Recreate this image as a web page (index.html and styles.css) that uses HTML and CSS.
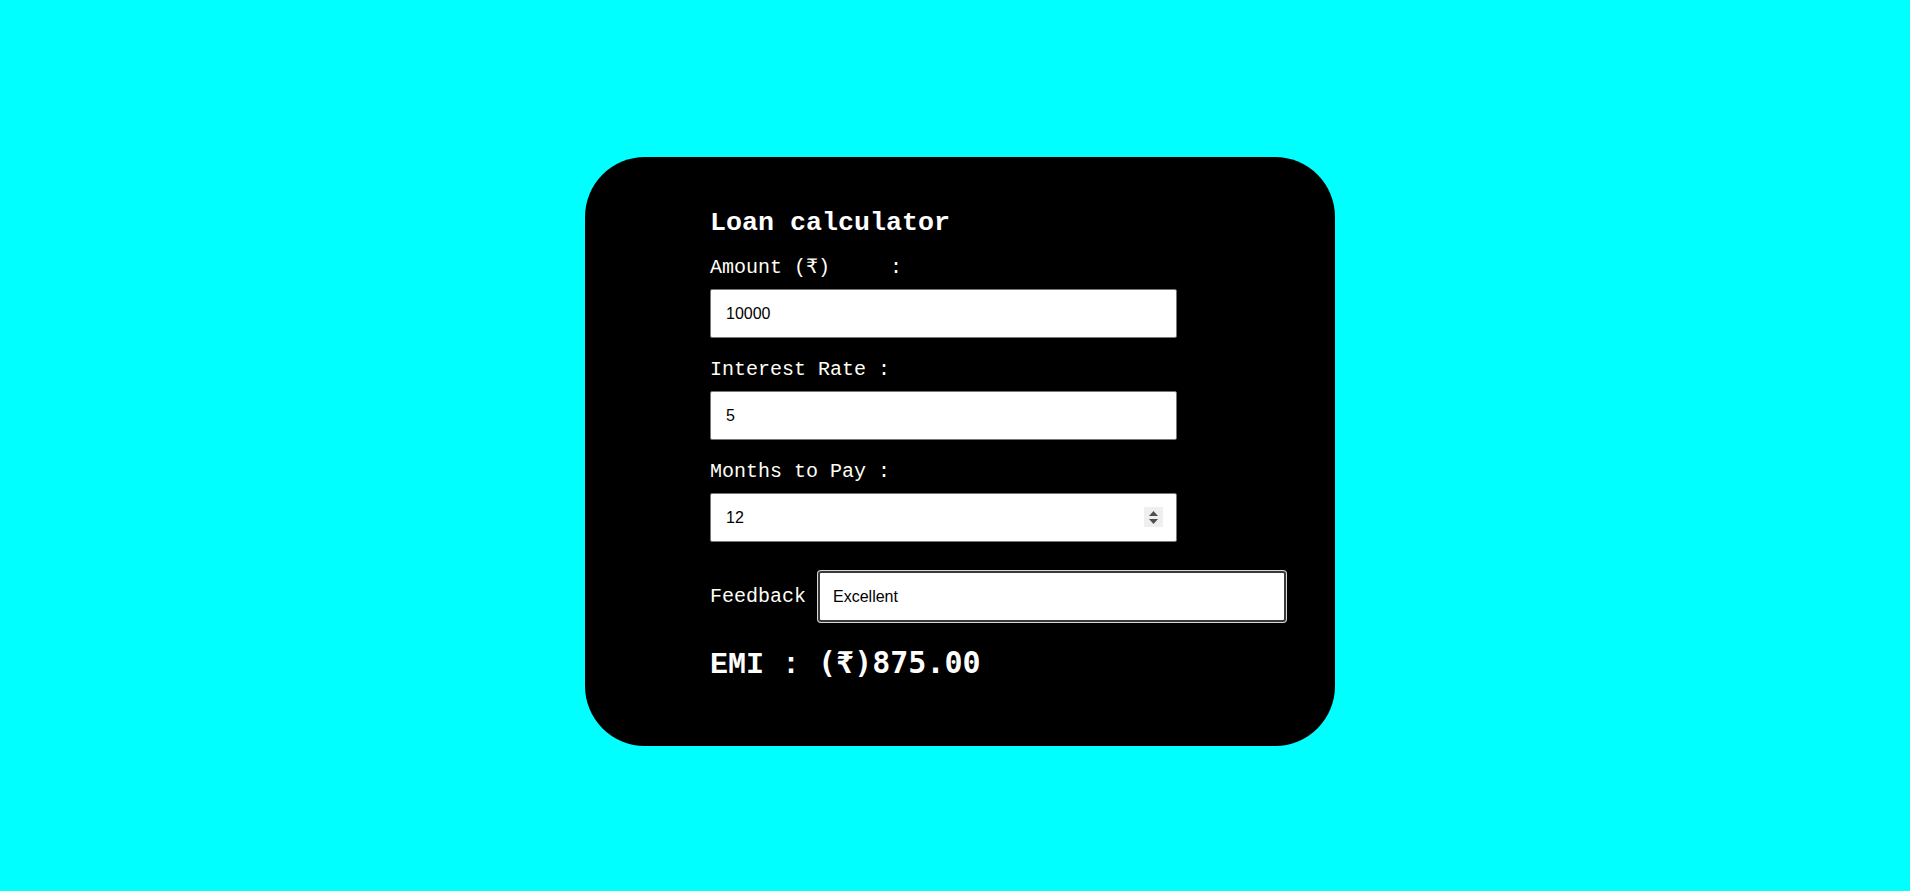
FILE: index.html
```html
<!DOCTYPE html>
<html lang="en">
<head>
<meta charset="utf-8">
<title>Loan calculator</title>
<link rel="stylesheet" href="styles.css">
</head>
<body>
<main class="page">
  <section class="card">
    <h1 class="title">Loan calculator</h1>

    <label class="label" for="amount">Amount (₹)     :</label>
    <input class="field" id="amount" type="text" value="10000">

    <label class="label gap" for="rate">Interest Rate :</label>
    <input class="field" id="rate" type="text" value="5">

    <label class="label gap" for="months">Months to Pay :</label>
    <div class="field-wrap">
      <input class="field" id="months" type="number" value="12">
      <span class="spinner" aria-hidden="true">
        <svg width="19" height="20" viewBox="0 0 19 20">
          <path d="M5 9 L14 9 L9.5 4 Z" fill="#505050"/>
          <path d="M5 12 L14 12 L9.5 17 Z" fill="#505050"/>
        </svg>
      </span>
    </div>

    <div class="feedback-row">
      <label class="feedback-label" for="feedback">Feedback</label>
      <input class="feedback" id="feedback" type="text" value="Excellent">
    </div>

    <h2 class="emi">EMI : <span class="emi-value">(₹)875.00</span></h2>
  </section>
</main>
</body>
</html>
```

FILE: styles.css
```css
html, body {
  margin: 0;
  padding: 0;
}

body {
  background: #00ffff;
  font-family: "Liberation Mono", "Courier New", monospace;
}

.page {
  display: flex;
  justify-content: center;
  padding-top: 157px;
  padding-left: 10px;
}

.card {
  width: 750px;
  box-sizing: border-box;
  background: #000;
  border-radius: 60px;
  padding: 50px 125px 63px 125px;
  display: flex;
  flex-direction: column;
  align-items: flex-start;
}

.title {
  margin: 0 0 17px 0;
  font-size: 26.67px;
  line-height: 32px;
  font-weight: bold;
  color: #fff;
}

.label {
  display: block;
  font-size: 20px;
  line-height: 24px;
  color: #fffef6;
  white-space: pre;
  margin: 0 0 9px 0;
}

.label.gap {
  margin-top: 20px;
}

.field {
  width: 467px;
  height: 49px;
  box-sizing: border-box;
  border: 1px solid #767676;
  border-radius: 2px;
  background: #fff;
  padding: 0 15px;
  font-family: "Liberation Sans", Arial, sans-serif;
  font-size: 16px;
  color: #000;
  margin: 0;
  outline: none;
}

.field[type="number"] {
  -moz-appearance: textfield;
}

.field::-webkit-inner-spin-button,
.field::-webkit-outer-spin-button {
  -webkit-appearance: none;
  margin: 0;
}

.field-wrap {
  position: relative;
  width: 467px;
  height: 49px;
}

.spinner {
  position: absolute;
  top: 14px;
  right: 14px;
  width: 19px;
  height: 20px;
  background: #efefef;
  display: block;
}

.spinner svg {
  display: block;
}

.feedback-row {
  display: flex;
  align-items: center;
  gap: 12px;
  margin-top: 29px;
}

.feedback-label {
  font-size: 20px;
  line-height: 24px;
  color: #fffef6;
}

.feedback {
  width: 468px;
  height: 51px;
  box-sizing: border-box;
  border: 2px solid #3a3a3a;
  border-radius: 3px;
  box-shadow: 0 0 0 1px #d8d8d8;
  background: #fff;
  padding: 0 13px;
  font-family: "Liberation Sans", Arial, sans-serif;
  font-size: 16px;
  color: #000;
  margin: 0;
  outline: none;
}

.emi {
  margin: 23px 0 0 0;
  font-size: 30px;
  line-height: 36px;
  font-weight: bold;
  color: #fff;
  white-space: pre;
}

.emi-value {
  font-family: "DejaVu Sans Mono", monospace;
  font-weight: bold;
}
```
